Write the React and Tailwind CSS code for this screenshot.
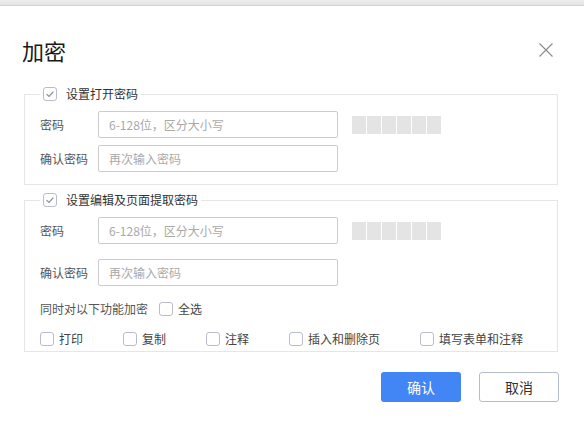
import React from "react";

const Check = ({ checked }) => (
  <span className="w-[14px] h-[14px] rounded-[3px] border border-[#b8bccb] bg-white flex items-center justify-center shrink-0">
    {checked && (
      <svg width="10" height="10" viewBox="0 0 10 10">
        <path d="M1.6 5.1 L4 7.4 L8.4 2.6" fill="none" stroke="#8a90a5" strokeWidth="1.3" />
      </svg>
    )}
  </span>
);

const Strength = () => (
  <div className="flex gap-px ml-[14px]">
    {[0, 1, 2, 3, 4, 5].map((i) => (
      <span key={i} className="w-[14px] h-[18px] bg-[#e4e4e4]" />
    ))}
  </div>
);

const Field = ({ label, placeholder, strength }) => (
  <div className="flex items-center">
    <span className="w-[58px] text-[12px] leading-4 text-[#555555]">{label}</span>
    <input
      readOnly
      placeholder={placeholder}
      className="w-[240px] h-[27px] border border-[#cccccc] rounded-[2px] pl-[10px] text-[12px] text-[#333] placeholder:text-[#a9a9a9] outline-none bg-white"
    />
    {strength && <Strength />}
  </div>
);

const Legend = ({ text }) => (
  <legend className="px-[3px]">
    <span className="flex items-center gap-[9px] h-4">
      <Check checked />
      <span className="text-[12px] leading-4 text-[#333333]">{text}</span>
    </span>
  </legend>
);

const Opt = ({ label, w }) => (
  <div className={`flex items-center gap-[5px] ${w}`}>
    <Check />
    <span className="text-[12px] leading-4 text-[#444444]">{label}</span>
  </div>
);

export default function App() {
  return (
    <div
      className="w-[584px] h-[431px] bg-white overflow-hidden"
      style={{ fontFamily: '"Noto Sans CJK SC", "Noto Sans", sans-serif' }}
    >
      <div className="h-[6px] bg-gradient-to-b from-[#eeeeee] to-[#e3e3e3] border-b border-[#d2d2d2]" />
      <div className="flex items-center justify-between pl-[22px] pr-[31px] mt-[29px] h-[30px]">
        <span className="text-[22px] leading-[30px] text-[#1a1a1a]">加密</span>
        <svg width="14" height="14" viewBox="0 0 14 14">
          <path d="M0.5 0.5 L13.5 13.5 M13.5 0.5 L0.5 13.5" stroke="#8a8a8a" strokeWidth="1.1" fill="none" />
        </svg>
      </div>
      <div className="pl-[24px] pr-[26px] mt-[21px]">
        <fieldset className="border border-[#e6e6e6] px-[15px] pb-[12px]">
          <Legend text="设置打开密码" />
          <div className="flex flex-col gap-[7px] mt-[9px]">
            <Field label="密码" placeholder="6-128位，区分大小写" strength />
            <Field label="确认密码" placeholder="再次输入密码" />
          </div>
        </fieldset>
        <fieldset className="border border-[#e6e6e6] px-[15px] pb-[5px] mt-[7px]">
          <Legend text="设置编辑及页面提取密码" />
          <div className="flex flex-col gap-[15px] mt-[9px]">
            <Field label="密码" placeholder="6-128位，区分大小写" strength />
            <Field label="确认密码" placeholder="再次输入密码" />
          </div>
          <div className="flex items-center mt-[15px] h-4">
            <span className="text-[12px] leading-4 text-[#555555]">同时对以下功能加密</span>
            <div className="flex items-center gap-[5px] ml-[11px]">
              <Check />
              <span className="text-[12px] leading-4 text-[#444444]">全选</span>
            </div>
          </div>
          <div className="flex items-center mt-[15px] h-[14px]">
            <Opt label="打印" w="w-[83px]" />
            <Opt label="复制" w="w-[83px]" />
            <Opt label="注释" w="w-[83px]" />
            <Opt label="插入和删除页" w="w-[131px]" />
            <Opt label="填写表单和注释" w="" />
          </div>
        </fieldset>
        <div className="flex justify-end gap-[18px] mt-[20px] -mr-px">
          <button className="w-[80px] h-[30px] rounded-[3px] bg-[#4285f4] text-white text-[14px]">确认</button>
          <button className="w-[80px] h-[30px] rounded-[3px] border border-[#b3bdcb] bg-white text-[#333333] text-[14px]">取消</button>
        </div>
      </div>
    </div>
  );
}
